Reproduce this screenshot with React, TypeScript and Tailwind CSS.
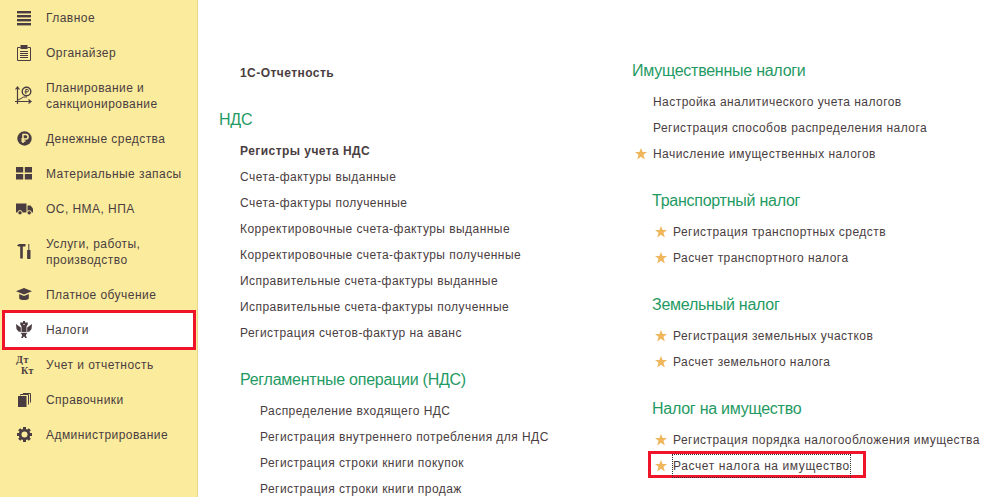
import React from 'react';

const ink = '#4a3d41';

function MenuIcon() {
  return (
    <svg width="16" height="16" viewBox="0 0 16 16" fill={ink}>
      <rect x="1" y="1" width="14" height="2.4" />
      <rect x="1" y="5" width="14" height="2.4" />
      <rect x="1" y="9" width="14" height="2.4" />
      <rect x="1" y="13" width="14" height="2.4" />
    </svg>
  );
}

function ClipboardIcon() {
  return (
    <svg width="14" height="16" viewBox="0 0 14 16" fill="none" stroke={ink}>
      <path d="M3.5 2.5H0.5V15.5H13.5V2.5H10.5" />
      <rect x="4" y="0.5" width="6" height="3" fill={ink} />
      <path d="M3 6.5H11M3 8.5H11M3 10.5H11M3 12.5H11" />
    </svg>
  );
}

function PlanIcon() {
  return (
    <svg width="18" height="19" viewBox="0 0 18 19" fill="none" stroke={ink}>
      <path d="M2.5 18V1M0.5 3.5L2.5 1L4.5 3.5" strokeWidth="1.2" />
      <path d="M0 15.5H16M13.5 13.5L16 15.5L13.5 17.5" strokeWidth="1.2" />
      <path d="M3 14L6 12.5L8.5 11H12" />
      <circle cx="11.5" cy="5.5" r="4.3" strokeWidth="1.4" />
      <path d="M10.8 8V3.5H12.3A1.1 1.1 0 0 1 12.3 5.8H9.5" />
    </svg>
  );
}

function RubleIcon() {
  return (
    <svg width="15" height="15" viewBox="0 0 15 15" fill="none">
      <circle cx="7.5" cy="7.5" r="7.2" fill={ink} />
      <path d="M6 12V3.5H8.8A2.3 2.3 0 0 1 8.8 8.1H4.3M4.3 10H8.5" stroke="#fbeb9c" strokeWidth="1.5" />
    </svg>
  );
}

function PalletIcon() {
  return (
    <svg width="16" height="14" viewBox="0 0 16 14" fill={ink}>
      <rect x="0" y="0" width="7.2" height="5.5" />
      <rect x="8.8" y="0" width="7.2" height="5.5" />
      <rect x="0" y="7" width="7.2" height="5.5" />
      <rect x="8.8" y="7" width="7.2" height="5.5" />
    </svg>
  );
}

function TruckIcon() {
  return (
    <svg width="17" height="12" viewBox="0 0 17 12" fill={ink}>
      <path d="M0 0.5H10.5V9.5H0Z" />
      <path d="M11.5 2.5H14.5L17 5.5V9.5H11.5Z" />
      <circle cx="4" cy="9.8" r="2.2" stroke="#fbeb9c" />
      <circle cx="13.2" cy="9.8" r="2.2" stroke="#fbeb9c" />
    </svg>
  );
}

function ToolsIcon() {
  return (
    <svg width="15" height="15" viewBox="0 0 15 15" fill={ink}>
      <path d="M0 1.5L2 0H8.5V2.5H5.8V14.5H3.2V2.5H1.5Z" />
      <path d="M11.3 0H12.3V6H13.5V14A1.7 1.7 0 0 1 10.1 14V6H11.3Z" />
    </svg>
  );
}

function CapIcon() {
  return (
    <svg width="16" height="13" viewBox="0 0 16 13" fill={ink}>
      <path d="M8 0L16 3.2L8 6.4L0 3.2Z" />
      <path d="M3.2 6L8 8L12.8 6V10.5C11.5 12.5 4.5 12.5 3.2 10.5Z" />
    </svg>
  );
}

function EagleIcon() {
  return (
    <svg width="16" height="17" viewBox="0 0 16 17" fill={ink}>
      <rect x="7" y="0" width="2" height="3" />
      <path d="M4 1.5H6.8L7.5 4H8.5L9.2 1.5H12L11.5 4L10.5 5.5V11H5.5V5.5L4.5 4Z" />
      <path d="M0 3L2 4.5L4.8 6.5V11L2.5 10.5L0.5 8Z" />
      <path d="M16 3L14 4.5L11.2 6.5V11L13.5 10.5L15.5 8Z" />
      <path d="M4.5 11.8H11.5L9.8 14L10.8 17H9.2L8 15.2L6.8 17H5.2L6.2 14Z" />
    </svg>
  );
}

function DebitCreditIcon() {
  return (
    <span className="flex w-[16px] flex-col font-['Liberation_Serif',serif] text-[10px] leading-[11px] font-bold tracking-[0.5px] text-[#4a3d41]">
      <span>Дт</span>
      <span className="ml-[5px]">Кт</span>
    </span>
  );
}

function BooksIcon() {
  return (
    <svg width="13" height="14" viewBox="0 0 13 14" fill="none" stroke={ink}>
      <rect x="0" y="3" width="8.5" height="11" fill={ink} stroke="none" />
      <path d="M2.5 2.5V1.5H10.5V11.5" />
      <path d="M5 0.5H12.5V9.5" />
    </svg>
  );
}

function GearIcon() {
  return (
    <svg width="15" height="15" viewBox="0 0 15 15" fill={ink}>
      <circle cx="7.5" cy="7.5" r="4.4" fill="none" stroke={ink} strokeWidth="2.8" />
      <rect x="6" y="0" width="3" height="15" />
      <rect x="0" y="6" width="15" height="3" />
      <rect x="6" y="0" width="3" height="15" transform="rotate(45 7.5 7.5)" />
      <rect x="0" y="6" width="15" height="3" transform="rotate(45 7.5 7.5)" />
      <circle cx="7.5" cy="7.5" r="3" fill="#fbeb9c" />
    </svg>
  );
}

function Star() {
  return (
    <svg width="12" height="12" viewBox="0 0 12 12" fill="#efb65c" className="shrink-0">
      <path d="M6 0L7.6 4H12L8.5 6.8L9.8 11.5L6 8.8L2.2 11.5L3.5 6.8L0 4H4.4Z" />
    </svg>
  );
}

function SideItem({ icon, label, active }: { icon: React.ReactNode; label: string | string[]; active?: boolean }) {
  const height = Array.isArray(label) ? 'h-[51px]' : 'h-[35px]';
  return (
    <div className={`relative flex shrink-0 items-center ${height}`}>
      {active && <div className="absolute top-[-2px] right-[1px] bottom-[-3px] left-[2px] border-[3px] border-[#f0142b] bg-white" />}
      <div className="relative flex w-[46px] shrink-0 justify-center pl-[2px]">{icon}</div>
      <div className="relative text-[12px] leading-[16px] tracking-[0.45px] text-[#4a3d41]">
        {Array.isArray(label) ? label.map((line) => <div key={line}>{line}</div>) : label}
      </div>
    </div>
  );
}

function Heading({ children, className }: { children: React.ReactNode; className: string }) {
  return <div className={`mb-[5px] flex h-[26px] items-center text-[16px] tracking-[-0.25px] text-[#1f9a63] ${className}`}>{children}</div>;
}

function Row({ children, bold, className }: { children: React.ReactNode; bold?: boolean; className: string }) {
  return (
    <div className={`flex h-[26px] items-center text-[12px] tracking-[0.45px] whitespace-nowrap text-[#4a3d41] ${bold ? 'font-bold' : ''} ${className}`}>
      {children}
    </div>
  );
}

function StarRow({ children, focus }: { children: React.ReactNode; focus?: boolean }) {
  return (
    <div className="relative ml-[23px] flex h-[26px] items-center gap-[6px] text-[12px] tracking-[0.45px] whitespace-nowrap text-[#4a3d41]">
      {focus && <div className="absolute top-[-2px] left-[-7px] h-[27px] w-[218px] border-[3px] border-[#f0142b]" />}
      <Star />
      {focus ? (
        <span className="relative -mx-[1px] border border-dotted border-[#333] py-[2px] tracking-[0.6px]">{children}</span>
      ) : (
        <span>{children}</span>
      )}
    </div>
  );
}

export default function App() {
  return (
    <div className="flex h-[497px] w-[1006px] overflow-hidden bg-white font-['Liberation_Sans',Arial,sans-serif]">
      <aside className="w-[198px] shrink-0 border-r border-[#e6d68c] bg-[#fbeb9c]">
        <SideItem icon={<MenuIcon />} label="Главное" />
        <SideItem icon={<ClipboardIcon />} label="Органайзер" />
        <SideItem icon={<PlanIcon />} label={['Планирование и', 'санкционирование']} />
        <SideItem icon={<RubleIcon />} label="Денежные средства" />
        <SideItem icon={<PalletIcon />} label="Материальные запасы" />
        <SideItem icon={<TruckIcon />} label="ОС, НМА, НПА" />
        <SideItem icon={<ToolsIcon />} label={['Услуги, работы,', 'производство']} />
        <SideItem icon={<CapIcon />} label="Платное обучение" />
        <SideItem icon={<EagleIcon />} label="Налоги" active />
        <SideItem icon={<DebitCreditIcon />} label="Учет и отчетность" />
        <SideItem icon={<BooksIcon />} label="Справочники" />
        <SideItem icon={<GearIcon />} label="Администрирование" />
      </aside>

      <main className="flex min-w-0 flex-1">
        <section className="w-[413px] shrink-0 pt-[60px] pl-[21px]">
          <Row bold className="ml-[21px]">1С-Отчетность</Row>
          <Heading className="mt-[21px]">НДС</Heading>
          <Row bold className="ml-[21px]">Регистры учета НДС</Row>
          <Row className="ml-[21px]">Счета-фактуры выданные</Row>
          <Row className="ml-[21px]">Счета-фактуры полученные</Row>
          <Row className="ml-[21px]">Корректировочные счета-фактуры выданные</Row>
          <Row className="ml-[21px]">Корректировочные счета-фактуры полученные</Row>
          <Row className="ml-[21px]">Исправительные счета-фактуры выданные</Row>
          <Row className="ml-[21px]">Исправительные счета-фактуры полученные</Row>
          <Row className="ml-[21px]">Регистрация счетов-фактур на аванс</Row>
          <Heading className="mt-[21px] ml-[21px]">Регламентные операции (НДС)</Heading>
          <Row className="ml-[41px]">Распределение входящего НДС</Row>
          <Row className="ml-[41px]">Регистрация внутреннего потребления для НДС</Row>
          <Row className="ml-[41px]">Регистрация строки книги покупок</Row>
          <Row className="ml-[41px]">Регистрация строки книги продаж</Row>
        </section>

        <section className="flex-1 pt-[58px] pl-[21px]">
          <Heading className="">Имущественные налоги</Heading>
          <Row className="ml-[21px]">Настройка аналитического учета налогов</Row>
          <Row className="ml-[21px]">Регистрация способов распределения налога</Row>
          <div className="relative ml-[3px] flex h-[26px] items-center gap-[6px] text-[12px] tracking-[0.45px] whitespace-nowrap text-[#4a3d41]">
            <Star />
            Начисление имущественных налогов
          </div>
          <Heading className="mt-[21px] ml-[20px]">Транспортный налог</Heading>
          <StarRow>Регистрация транспортных средств</StarRow>
          <StarRow>Расчет транспортного налога</StarRow>
          <Heading className="mt-[21px] ml-[20px]">Земельный налог</Heading>
          <StarRow>Регистрация земельных участков</StarRow>
          <StarRow>Расчет земельного налога</StarRow>
          <Heading className="mt-[21px] ml-[20px]">Налог на имущество</Heading>
          <StarRow>Регистрация порядка налогообложения имущества</StarRow>
          <StarRow focus>Расчет налога на имущество</StarRow>
        </section>
      </main>
    </div>
  );
}
